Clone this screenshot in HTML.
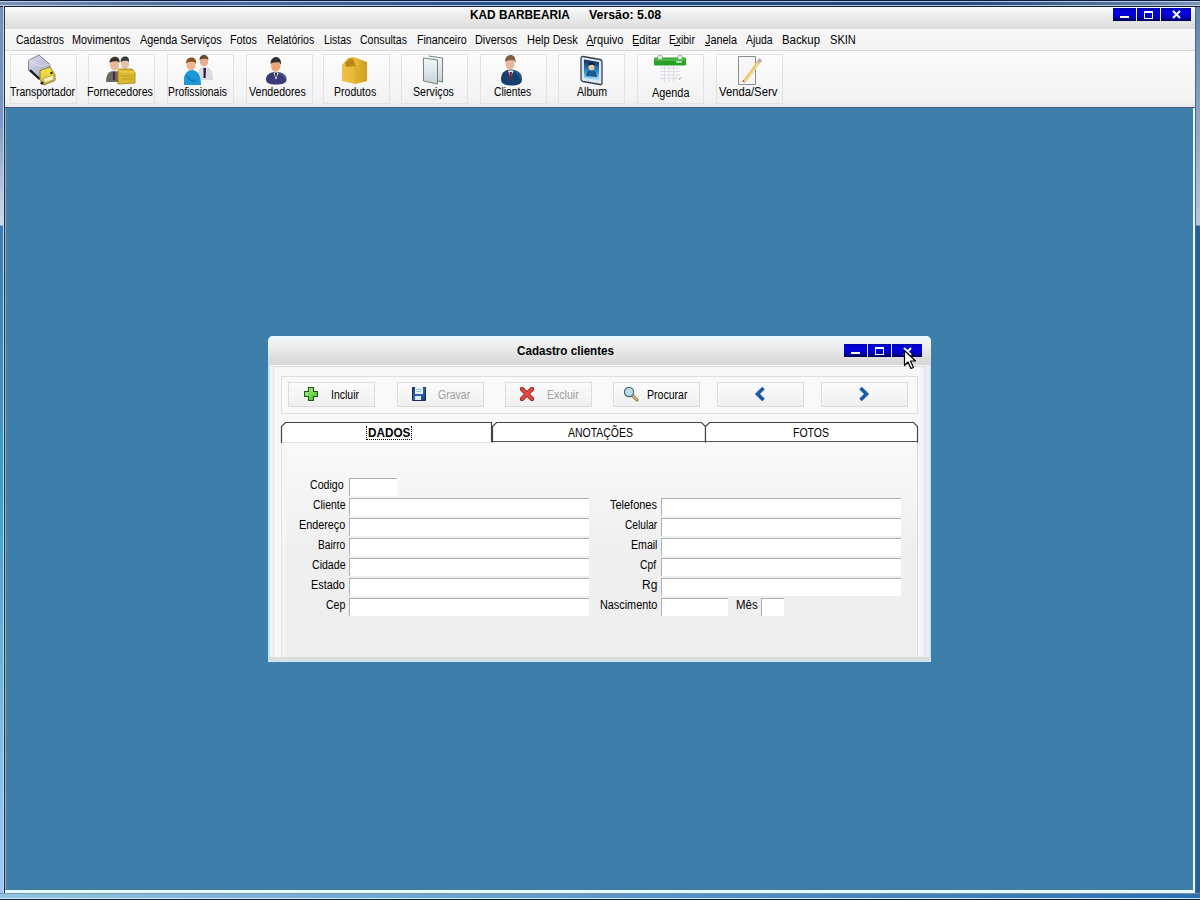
<!DOCTYPE html>
<html><head><meta charset="utf-8">
<style>
*{box-sizing:border-box}
html,body{margin:0;padding:0;width:1200px;height:900px;overflow:hidden;background:#6f8cb4;font-family:"Liberation Sans",sans-serif;font-size:11px;color:#000}
.a{position:absolute}
.t{position:absolute;white-space:nowrap;line-height:15px;transform-origin:0 0}
.b{font-weight:bold}
/* frame */
#frame-top{left:0;top:0;width:1200px;height:7px;background:linear-gradient(#0c1c44 0,#0c1c44 1px,#a8c0e8 1px,#a8c0e8 2px,#3f64a0 2px,#3f64a0 5px,#98b8e8 5px,#98b8e8 6px,#102030 6px)}
#title{left:5px;top:7px;width:1190px;height:22px;background:linear-gradient(#fafbfb,#f0f0f0 30%,#dcdcdc)}
#menu{left:5px;top:29px;width:1190px;height:22px;background:linear-gradient(#f8f8f8,#f2f2f2);border-bottom:1px solid #d6d6d6}
#tool{left:5px;top:51px;width:1190px;height:56px;background:linear-gradient(#fbfbfb,#f3f3f3 85%,#eef2ee 92%,#ebe8f2)}
#tool-line{left:5px;top:107px;width:1190px;height:1px;background:#4d5d7a}
#mdi{left:6px;top:108px;width:1187px;height:782px;background:#3d7eaa}
.cb{position:absolute;background:linear-gradient(#0000b0 0,#0404e0 35%,#0000c0 70%,#000070 92%,#000040);border:0}
.tb{position:absolute;top:54px;width:67px;height:50px;border:1px solid #e2e2e2;background:linear-gradient(#fdfdfd,#f1f1f1)}
.tb .t{left:0;width:65px;text-align:center;top:32px}
.tb svg{position:absolute;left:16px;top:1px}
.db{position:absolute;top:382px;width:87px;height:25px;border:1px solid #dcdcdc;background:linear-gradient(#fbfbfb,#f0f0f0)}
.db .t{top:7px}
.in{position:absolute;height:18px;background:#fff;border-top:1px solid #b0b0b0;border-left:1px solid #b0b0b0}
</style></head><body>
<!-- outer frame -->
<div class="a" style="left:0;top:0;width:1200px;height:7px;background:linear-gradient(90deg,#7c90b4 0,#52709e 150px,#26508a 500px,#1e4676 950px,#5c7aa4 1150px,#8094b4 1200px)"></div>
<div class="a" style="left:0;top:0;width:1200px;height:7px;background:linear-gradient(#0c1c40 0,#0c1c40 1px,rgba(196,212,238,.9) 1px,rgba(196,212,238,.9) 2px,transparent 2px,transparent 5px,rgba(196,212,236,.9) 5px,rgba(196,212,236,.9) 6px,#102030 6px)"></div>
<div class="a" style="left:0;top:7px;width:4px;height:893px;background:linear-gradient(#7090b8 0,#7898c0 110px,#d0dcf0 218px,#3a7ab8 219px,#40a0c8 490px,#80c0e8 750px,#a0c8f0 893px)"></div>
<div class="a" style="left:3px;top:6px;width:1px;height:894px;background:#c0d4ec"></div>
<div class="a" style="left:4px;top:7px;width:1px;height:893px;background:#203450"></div>
<div class="a" style="left:1195px;top:7px;width:5px;height:893px;background:linear-gradient(#6484aa 0,#b8c4d8 218px,#2460a0 219px,#2460a0 893px)"></div>
<div class="a" style="left:1195px;top:7px;width:1px;height:893px;background:#406890"></div>
<div class="a" id="title"></div>
<div class="a" id="menu"></div>
<div class="a" id="tool"></div>
<div class="a" id="tool-line"></div>
<div class="a" id="mdi"></div>
<div class="a" style="left:5px;top:108px;width:3px;height:782px;background:linear-gradient(90deg,#8ab0c8 0,#8ab0c8 1px,#507890 1px,#4a80a8 3px)"></div>
<div class="a" style="left:1192px;top:108px;width:1px;height:782px;background:#4a7890"></div>
<div class="a" style="left:1193px;top:108px;width:2px;height:785px;background:#e0fcff"></div>
<div class="a" style="left:5px;top:889px;width:1188px;height:1px;background:#4a7890"></div>
<div class="a" style="left:5px;top:890px;width:1190px;height:3px;background:#e0fcff"></div>
<div class="a" style="left:0;top:893px;width:1200px;height:7px;background:linear-gradient(90deg,#90c4e4,#4a8ac0 800px,#2a70b0)"></div>
<div class="a" style="left:0;top:893px;width:1200px;height:7px;background:linear-gradient(rgba(128,144,160,.9) 0,rgba(128,144,160,.9) 1px,transparent 1px,transparent 5px,rgba(224,240,255,.9) 5px,rgba(224,240,255,.9) 6px,#102030 6px)"></div>

<!-- title text -->
<!-- caption buttons -->
<div class="cb" style="left:1113px;top:8px;width:23px;height:13px"><div class="a" style="left:7px;top:8px;width:9px;height:2px;background:#fff"></div></div>
<div class="cb" style="left:1137px;top:8px;width:23px;height:13px"><div class="a" style="left:7px;top:3px;width:9px;height:8px;border:1px solid #fff;border-top-width:2px"></div></div>
<div class="cb" style="left:1161px;top:8px;width:30px;height:13px"><svg class="a" style="left:11px;top:2px" width="9" height="9" viewBox="0 0 9 9"><path d="M1 1L8 8M8 1L1 8" stroke="#fff" stroke-width="2"/></svg></div>

<!-- menu -->

<!-- toolbar buttons -->
<div class="tb" style="left:10px"></div>
<div class="tb" style="left:88px"></div>
<div class="tb" style="left:167px"></div>
<div class="tb" style="left:246px"></div>
<div class="tb" style="left:323px"></div>
<div class="tb" style="left:401px"></div>
<div class="tb" style="left:480px"></div>
<div class="tb" style="left:558px"></div>
<div class="tb" style="left:637px"></div>
<div class="tb" style="left:716px"></div>

<!-- DIALOG -->
<div class="a" id="dlg" style="left:268px;top:336px;width:663px;height:326px;border-radius:5px 5px 0 0;background:#c8e8f8;overflow:hidden">
  <div class="a" style="left:0;top:0;width:663px;height:29px;background:linear-gradient(#e4fdff 0,#f0f4f4 4px,#ececec 40%,#dadada 85%,#d8d8d8)"></div>
  <div class="a" style="left:2px;top:29px;width:659px;height:292px;background:linear-gradient(90deg,#f0f0ec 0,#f4f4f2 4px,#f8f8f8 6px,#f8f8f8 650px,#ece8f4 655px,#f0f0f8)"></div>
  <div class="a" style="left:5px;top:30px;width:652px;height:1px;background:#dcdcdc"></div>
  <div class="a" style="left:5px;top:30px;width:1px;height:291px;background:#e6e6e6"></div>
  <div class="a" style="left:657px;top:30px;width:1px;height:291px;background:#e6e6e6"></div>
  <div class="a" style="left:1px;top:321px;width:661px;height:4px;background:#dcdcdc"></div>
  <div class="a" style="left:0;top:325px;width:663px;height:1px;background:#c8ecfc"></div>
</div>
<div class="cb" style="left:844px;top:344px;width:23px;height:13px"><div class="a" style="left:7px;top:8px;width:9px;height:2px;background:#fff"></div></div>
<div class="cb" style="left:868px;top:344px;width:23px;height:13px"><div class="a" style="left:7px;top:3px;width:9px;height:8px;border:1px solid #fff;border-top-width:2px"></div></div>
<div class="cb" style="left:892px;top:344px;width:30px;height:13px"><svg class="a" style="left:11px;top:3px" width="9" height="9" viewBox="0 0 9 9"><path d="M1 1L8 8M8 1L1 8" stroke="#fff" stroke-width="2"/></svg></div>

<!-- panel -->
<div class="a" style="left:281px;top:376px;width:637px;height:38px;border:1px solid #dedede;background:#f9f9f9"></div>
<div class="db" style="left:288px"></div>
<div class="db" style="left:397px"></div>
<div class="db" style="left:505px"></div>
<div class="db" style="left:613px"></div>
<div class="db" style="left:717px"></div>
<div class="db" style="left:821px"></div>

<!-- tabs -->
<div class="a" style="left:281px;top:442px;width:637px;height:215px;border-left:1px solid #e4e4e4;border-right:1px solid #dadada;background:linear-gradient(#fafafa 0,#f6f6f6 40px,#efefef 110px)"></div>
<div class="a" style="left:282px;top:442px;width:5px;height:215px;background:linear-gradient(90deg,rgba(248,246,248,.8),rgba(244,244,244,.4))"></div>
<svg class="a" style="left:280px;top:421px" width="640" height="23" viewBox="0 0 640 23">
  <path d="M1.5 22V5.5L5.5 1.5H211.5V22" fill="#fff" stroke="#444" stroke-width="1.2"/>
  <path d="M212.5 21.5V5.5L216.5 1.5H421.5L425.5 5.5V21.5" fill="#fff" stroke="#444" stroke-width="1.2"/>
  <path d="M425.5 21.5V5.5L429.5 1.5H633.5L637.5 5.5V21.5" fill="#fff" stroke="#444" stroke-width="1.2"/>
  <path d="M212 20.5H638" stroke="#555" stroke-width="1.2"/>
  <path d="M2 21.5H212" stroke="#e2e2e2" stroke-width="1"/>
</svg>
<div class="a" style="left:366px;top:426px;width:46px;height:14px;border:1px dotted #000;border-top:0"></div>

<!-- form -->
<div class="in" style="left:349px;top:478px;width:48px"></div>
<div class="in" style="left:349px;top:498px;width:240px"></div>
<div class="in" style="left:349px;top:518px;width:240px"></div>
<div class="in" style="left:349px;top:538px;width:240px"></div>
<div class="in" style="left:349px;top:558px;width:240px"></div>
<div class="in" style="left:349px;top:578px;width:240px"></div>
<div class="in" style="left:349px;top:598px;width:240px"></div>

<div class="in" style="left:661px;top:498px;width:240px"></div>
<div class="in" style="left:661px;top:518px;width:240px"></div>
<div class="in" style="left:661px;top:538px;width:240px"></div>
<div class="in" style="left:661px;top:558px;width:240px"></div>
<div class="in" style="left:661px;top:578px;width:240px"></div>
<div class="in" style="left:661px;top:598px;width:67px"></div>
<div class="in" style="left:761px;top:598px;width:23px"></div>


<!-- toolbar icons -->
<svg class="a" style="left:27px;top:54px" width="32" height="32" viewBox="0 0 32 32">
  <defs><linearGradient id="tk" x1="0" y1="0" x2="1" y2="1"><stop offset="0" stop-color="#dcdcec"/><stop offset="1" stop-color="#a4a4c0"/></linearGradient>
  <linearGradient id="cab" x1="0" y1="0" x2="0" y2="1"><stop offset="0" stop-color="#f4e44a"/><stop offset="1" stop-color="#dcc038"/></linearGradient></defs>
  <path d="M1.5 6.5L12 1L23 10.5V16L13.5 26.5L1.5 16.5Z" fill="url(#tk)" stroke="#6a6a7a" stroke-width="0.8"/>
  <path d="M1.5 6.5L12 12L23 10.5" fill="none" stroke="#f0f0f8" stroke-width="0.8" opacity="0.8"/>
  <path d="M3 16L12.5 25" stroke="#1a1a1a" stroke-width="2.2"/>
  <path d="M13 16.5L23 13L28 20.5V26.5L17 31L13 25.5Z" fill="url(#cab)" stroke="#7a6420" stroke-width="0.8"/>
  <path d="M16.5 24.5L26.5 21L27 25.5L17.5 29Z" fill="#faf4b8" stroke="#8a7430" stroke-width="0.5"/>
  <circle cx="15" cy="29" r="1.6" fill="#202020"/><circle cx="24.5" cy="19" r="1.2" fill="#202020"/>
</svg>
<svg class="a" style="left:105px;top:54px" width="32" height="32" viewBox="0 0 32 32">
  <path d="M1 28C1 20 4 17 9 17C14 17 17 20 17 28Z" fill="#6a6a60"/>
  <path d="M8 18L10 18L10 26L8 26Z" fill="#502040"/>
  <ellipse cx="9.5" cy="11" rx="4.6" ry="5.4" fill="#e8b898"/>
  <path d="M4.5 9C4.5 4 8 2.8 10 2.8C13 2.8 15 5 14.5 9L13 7.5C11 7 8 7 6 8Z" fill="#3a3028"/>
  <ellipse cx="20" cy="10" rx="4.2" ry="5" fill="#e8c0a8"/>
  <path d="M15.5 8C15.5 4 18 2.5 20 2.5C23 2.5 24.5 4.5 24 8L23 7C21 6.5 18 6.5 16.5 7.5Z" fill="#3a3a36"/>
  <path d="M13 15L27 15L30 18L30 29L13 30Z" fill="#d8b830" stroke="#a08018" stroke-width="0.8"/>
  <path d="M13 15L16 18L30 18" fill="none" stroke="#f0d850" stroke-width="1"/>
  <path d="M16 22H28M16 25H28" stroke="#b89820" stroke-width="0.8"/>
</svg>
<svg class="a" style="left:184px;top:54px" width="32" height="32" viewBox="0 0 32 32">
  <path d="M13 26C13 16 16 13 21 13C26 13 29 16 29 26Z" fill="#d8dce0"/>
  <path d="M19.5 14L22 14L21.5 24L19.5 24Z" fill="#301848"/>
  <ellipse cx="20" cy="7.5" rx="4.2" ry="5" fill="#e0b090"/>
  <path d="M15.5 6C15.5 2 18 1 20 1C23 1 24.5 3 24.5 6L23 5C21 4.5 18 4.5 16.5 5.5Z" fill="#684830"/>
  <path d="M-1 31C-1 21 3 16 8 16C13 16 17 21 17 31Z" fill="#1c98d8"/>
  <path d="M3 22C5 26 9 28 12 27" stroke="#0a70b0" stroke-width="1.2" fill="none"/>
  <ellipse cx="7" cy="11" rx="4.6" ry="5.4" fill="#eab890"/>
  <path d="M2 9.5C2 5 5 3.5 7.5 3.5C11 3.5 12.5 6 12 10L10.5 8C8.5 7.5 5 7.5 3.5 8.5Z" fill="#8a5020"/>
</svg>
<svg class="a" style="left:263px;top:54px" width="32" height="32" viewBox="0 0 32 32">
  <path d="M3 25.5C3 20.5 7 18 13 18C19 18 23.5 20.5 23.5 25.5C23.5 29.5 19 30.5 13 30.5C7 30.5 3 29.5 3 25.5Z" fill="#3a3a78"/><path d="M15 19.5C19 20 22 22 22 25" stroke="#6a6aa8" stroke-width="1.2" fill="none" opacity="0.7"/>
  <path d="M10.5 18.5L15.5 18.5L13 26Z" fill="#f0f0f0"/>
  <path d="M12 19L14 19L13.5 23L12.5 23Z" fill="#102010"/>
  <ellipse cx="12.7" cy="12" rx="4.7" ry="5.8" fill="#eaa878"/>
  <path d="M7.5 10C7.5 5 10.5 3 13 3C16.5 3 18.5 6 18 11L16.5 8.5C14 8 11 8 9 9Z" fill="#303030"/>
</svg>
<svg class="a" style="left:340px;top:54px" width="32" height="32" viewBox="0 0 32 32">
  <defs><linearGradient id="bx" x1="0" y1="0" x2="1" y2="0"><stop offset="0" stop-color="#f0c048"/><stop offset="0.6" stop-color="#e8b838"/><stop offset="1" stop-color="#c89818"/></linearGradient></defs>
  <path d="M2 11L8 4L14 3L27 8L27 27L15 30L2 27Z" fill="url(#bx)"/>
  <path d="M5 9L10 4L13 5L16 12L6 13Z" fill="#b88a18"/>
  <path d="M14 12L27 10L27 27L15 30Z" fill="#d8a828" opacity="0.6"/>
</svg>
<svg class="a" style="left:418px;top:54px" width="32" height="32" viewBox="0 0 32 32">
  <defs><linearGradient id="pg" x1="0" y1="0" x2="0" y2="1"><stop offset="0" stop-color="#f4f8fa"/><stop offset="1" stop-color="#c8d4d8"/></linearGradient></defs>
  <path d="M10.5 2L24.5 4V28L19.5 27" fill="url(#pg)" stroke="#6a7474" stroke-width="0.9"/>
  <path d="M5.5 4L19.5 6V30L5.5 27Z" fill="url(#pg)" stroke="#6a7474" stroke-width="0.9"/>
</svg>
<svg class="a" style="left:497px;top:54px" width="32" height="32" viewBox="0 0 32 32">
  <path d="M4 25C4 19 8 15.5 14 15.5C20 15.5 25 19 25 25C25 30 21 31.5 14.5 31.5C8 31.5 4 30 4 25Z" fill="#17406e"/><path d="M16 17C21 18 23.5 21 23.5 25" stroke="#2a6aa8" stroke-width="1.5" fill="none" opacity="0.7"/>
  <path d="M11 16.5L16.5 16.5L13.5 25Z" fill="#f0e8e8"/>
  <path d="M12.5 18L15 18L14.5 26L12.5 25Z" fill="#702040"/>
  <ellipse cx="13" cy="10" rx="4.4" ry="5.6" fill="#eab898"/>
  <path d="M8 8C8 3 11 1 13.5 1C17 1 19 3.5 18.5 9L17 6.5C15 6 11 6 9.5 7Z" fill="#806040"/>
</svg>
<svg class="a" style="left:575px;top:54px" width="32" height="32" viewBox="0 0 32 32">
  <defs><linearGradient id="ph" x1="0" y1="0" x2="0" y2="1"><stop offset="0" stop-color="#0c2c58"/><stop offset="0.55" stop-color="#2a8cc8"/><stop offset="1" stop-color="#b8e8fa"/></linearGradient></defs>
  <path d="M8 2.5L25 5.5Q27 6 27 8V29Q27 31 25 30.5L8 27.5Q6 27 6 25V4.5Q6 2.2 8 2.5Z" fill="#dce8f0" stroke="#3a3e44" stroke-width="1.3"/>
  <path d="M9 5.5L24 8V26.5L9 24Z" fill="url(#ph)"/>
  <path d="M11 22C11 18 13.5 16 16.5 16C19.5 16 22 18.5 22 23Z" fill="#1a5a90"/>
  <ellipse cx="16.5" cy="13" rx="3" ry="3.6" fill="#e8c8a8"/>
  <path d="M13.2 12C13.2 9 15 8.2 16.5 8.2C18.5 8.2 20 9.5 19.8 12L18.5 11C17 10.6 15 10.6 14 11.3Z" fill="#0a1a30"/>
</svg>
<svg class="a" style="left:654px;top:54px" width="32" height="32" viewBox="0 0 32 32">
  <path d="M6 14H26M6 17.5H26M6 21H26M6 24.5H26M10.5 12V28M15 12V28M19.5 12V28" stroke="#dcdce4" stroke-width="1"/>
  <path d="M25 26L28 23" stroke="#a0a0a0" stroke-width="0.8"/>
  <path d="M1 3.5H31Q32 3.5 32 5V10.5Q32 11.5 31 11.5H1Q0 11.5 0 10.5V5Q0 3.5 1 3.5Z" fill="#28a028"/>
  <path d="M1 4.5H31V7H1Z" fill="#58c058" opacity="0.7"/>
  <rect x="3.5" y="1.5" width="5" height="4" rx="1.5" fill="#d8ecd8" stroke="#609060" stroke-width="0.5"/><rect x="23.5" y="1.5" width="5" height="4" rx="1.5" fill="#d8ecd8" stroke="#609060" stroke-width="0.5"/>
  <path d="M22 8H28" stroke="#c8f0c8" stroke-width="1.6"/>
</svg>
<svg class="a" style="left:733px;top:54px" width="32" height="32" viewBox="0 0 32 32">
  <path d="M5.5 2.5H22.5V30.5H5.5Z" fill="#f6f6f8" stroke="#8a8e92" stroke-width="1"/>
  <path d="M9.5 27.5L24 7L27 9.5L12.5 29Z" fill="#f4d488"/>
  <path d="M10.5 27L25 7.5" stroke="#e0b050" stroke-width="0.8"/>
  <path d="M9.5 27.5L10.5 25.5L11.5 28.5Z" fill="#806040"/>
  <path d="M24 7L26.5 4L29 6.5L27 9.5Z" fill="#b8a8b8"/>
</svg>
<!-- dialog button icons -->
<svg class="a" style="left:304px;top:387px" width="14" height="14" viewBox="0 0 14 14">
  <defs><linearGradient id="pl" x1="0" y1="0" x2="1" y2="1"><stop offset="0" stop-color="#b0f890"/><stop offset="1" stop-color="#40b820"/></linearGradient></defs><path d="M4.5 0.5H9.5V4.5H13.5V9.5H9.5V13.5H4.5V9.5H0.5V4.5H4.5Z" fill="url(#pl)" stroke="#1a5a14" stroke-width="1.1"/>
</svg>
<svg class="a" style="left:412px;top:387px" width="14" height="14" viewBox="0 0 14 14">
  <defs><linearGradient id="fl" x1="0" y1="0" x2="1" y2="1"><stop offset="0" stop-color="#1a3a80"/><stop offset="0.5" stop-color="#3868b8"/><stop offset="1" stop-color="#1a3a78"/></linearGradient></defs>
  <path d="M0.5 0.5H13.5V13.5H0.5Z" fill="url(#fl)" stroke="#1a2a60" stroke-width="1"/>
  <path d="M3 0H11V7H3Z" fill="#e0f4f4"/>
  <path d="M4 2.5H10M4 4.5H9" stroke="#9ab0b8" stroke-width="0.7"/>
  <path d="M3 9H9V13H3Z" fill="#d8ecfc"/>
</svg>
<svg class="a" style="left:520px;top:387px" width="14" height="14" viewBox="0 0 14 14">
  <path d="M2 2L12 12M12 2L2 12" stroke="#8a2020" stroke-width="4.5" stroke-linecap="round"/>
  <path d="M2 2L12 12M12 2L2 12" stroke="#e84840" stroke-width="2.8" stroke-linecap="round"/>
</svg>
<svg class="a" style="left:623px;top:386px" width="16" height="16" viewBox="0 0 16 16">
  <path d="M9 9L14 14" stroke="#806830" stroke-width="3" stroke-linecap="round"/>
  <path d="M9 9L14 14" stroke="#e0c890" stroke-width="1.4" stroke-linecap="round"/>
  <circle cx="6" cy="6" r="4.6" fill="#b8dce8" stroke="#506870" stroke-width="1.2"/>
</svg>
<svg class="a" style="left:754px;top:386px" width="14" height="16" viewBox="0 0 14 16">
  <path d="M9.5 2L3.5 8L9.5 14" fill="none" stroke="#1a5aa8" stroke-width="3.6"/>
</svg>
<svg class="a" style="left:857px;top:386px" width="14" height="16" viewBox="0 0 14 16">
  <path d="M3.5 2L9.5 8L3.5 14" fill="none" stroke="#1a5aa8" stroke-width="3.6"/>
</svg>

<!-- cursor -->
<svg class="a" style="left:903px;top:349px" width="14" height="21" viewBox="0 0 14 21"><path d="M1.5 1.5V16.5L5 13L8 19.5L10.5 18.5L7.5 12H12.5Z" fill="#fff" stroke="#000" stroke-width="1.2" stroke-linejoin="round"/></svg>

<!--UL-->
<div class="a" style="left:587px;top:45px;width:7px;height:1px;background:#000"></div>
<div class="a" style="left:633px;top:45px;width:6px;height:1px;background:#000"></div>
<div class="a" style="left:674px;top:45px;width:6px;height:1px;background:#000"></div>
<div class="a" style="left:705px;top:45px;width:5px;height:1px;background:#000"></div>
<!--/UL-->
<!--TEXT-->
<div class="t" style="left:469.61px;top:8px;font-size:12.0px;font-weight:700;transform:scaleX(0.9860)">KAD BARBEARIA</div>
<div class="t" style="left:589.40px;top:8px;font-size:12.0px;font-weight:700;transform:scaleX(1.0300)">Versão: 5.08</div>
<div class="t" style="left:15.62px;top:33px;font-size:12.0px;font-weight:400;transform:scaleX(0.8774)">Cadastros</div>
<div class="t" style="left:72.10px;top:33px;font-size:12.0px;font-weight:400;transform:scaleX(0.9048)">Movimentos</div>
<div class="t" style="left:140.00px;top:33px;font-size:12.0px;font-weight:400;transform:scaleX(0.9000)">Agenda Serviços</div>
<div class="t" style="left:230.10px;top:33px;font-size:12.0px;font-weight:400;transform:scaleX(0.8966)">Fotos</div>
<div class="t" style="left:266.63px;top:33px;font-size:12.0px;font-weight:400;transform:scaleX(0.8726)">Relatórios</div>
<div class="t" style="left:323.63px;top:33px;font-size:12.0px;font-weight:400;transform:scaleX(0.8667)">Listas</div>
<div class="t" style="left:360.37px;top:33px;font-size:12.0px;font-weight:400;transform:scaleX(0.8798)">Consultas</div>
<div class="t" style="left:416.61px;top:33px;font-size:12.0px;font-weight:400;transform:scaleX(0.8864)">Financeiro</div>
<div class="t" style="left:475.34px;top:33px;font-size:12.0px;font-weight:400;transform:scaleX(0.9056)">Diversos</div>
<div class="t" style="left:526.58px;top:33px;font-size:12.0px;font-weight:400;transform:scaleX(0.9167)">Help Desk</div>
<div class="t" style="left:586.25px;top:33px;font-size:12.0px;font-weight:400;transform:scaleX(0.9187)">Arquivo</div>
<div class="t" style="left:631.58px;top:33px;font-size:12.0px;font-weight:400;transform:scaleX(0.9167)">Editar</div>
<div class="t" style="left:669.14px;top:33px;font-size:12.0px;font-weight:400;transform:scaleX(0.8621)">Exibir</div>
<div class="t" style="left:704.50px;top:33px;font-size:12.0px;font-weight:400;transform:scaleX(0.9071)">Janela</div>
<div class="t" style="left:746.25px;top:33px;font-size:12.0px;font-weight:400;transform:scaleX(0.8629)">Ajuda</div>
<div class="t" style="left:782.05px;top:33px;font-size:12.0px;font-weight:400;transform:scaleX(0.9487)">Backup</div>
<div class="t" style="left:829.58px;top:33px;font-size:12.0px;font-weight:400;transform:scaleX(0.9231)">SKIN</div>
<div class="t" style="left:10.00px;top:85px;font-size:12.0px;font-weight:400;transform:scaleX(0.8667)">Transportador</div>
<div class="t" style="left:87.41px;top:85px;font-size:12.0px;font-weight:400;transform:scaleX(0.8904)">Fornecedores</div>
<div class="t" style="left:168.43px;top:85px;font-size:12.0px;font-weight:400;transform:scaleX(0.8657)">Profissionais</div>
<div class="t" style="left:249.30px;top:85px;font-size:12.0px;font-weight:400;transform:scaleX(0.8859)">Vendedores</div>
<div class="t" style="left:333.62px;top:85px;font-size:12.0px;font-weight:400;transform:scaleX(0.8777)">Produtos</div>
<div class="t" style="left:412.86px;top:85px;font-size:12.0px;font-weight:400;transform:scaleX(0.8889)">Serviços</div>
<div class="t" style="left:494.04px;top:85px;font-size:12.0px;font-weight:400;transform:scaleX(0.8595)">Clientes</div>
<div class="t" style="left:577.00px;top:85px;font-size:12.0px;font-weight:400;transform:scaleX(0.8864)">Album</div>
<div class="t" style="left:651.90px;top:86px;font-size:12.0px;font-weight:400;transform:scaleX(0.9049)">Agenda</div>
<div class="t" style="left:718.75px;top:85px;font-size:12.0px;font-weight:400;transform:scaleX(0.9395)">Venda/Serv</div>
<div class="t" style="left:517.00px;top:344px;font-size:12.0px;font-weight:700;transform:scaleX(0.9700)">Cadastro clientes</div>
<div class="t" style="left:330.83px;top:388px;font-size:12.0px;font-weight:400;transform:scaleX(0.8742)">Incluir</div>
<div class="t" style="left:438.32px;top:388px;font-size:12.0px;font-weight:400;color:#a0a0a0;transform:scaleX(0.8778)">Gravar</div>
<div class="t" style="left:546.62px;top:388px;font-size:12.0px;font-weight:400;color:#a0a0a0;transform:scaleX(0.8800)">Excluir</div>
<div class="t" style="left:646.62px;top:388px;font-size:12.0px;font-weight:400;transform:scaleX(0.8800)">Procurar</div>
<div class="t" style="left:368.02px;top:426px;font-size:12.0px;font-weight:700;transform:scaleX(0.9762)">DADOS</div>
<div class="t" style="left:567.50px;top:426px;font-size:12.0px;font-weight:400;transform:scaleX(0.8716)">ANOTAÇÕES</div>
<div class="t" style="left:793.12px;top:426px;font-size:12.0px;font-weight:400;transform:scaleX(0.8750)">FOTOS</div>
<div class="t" style="left:309.52px;top:478px;font-size:12.0px;font-weight:400;transform:scaleX(0.8811)">Codigo</div>
<div class="t" style="left:312.83px;top:498px;font-size:12.0px;font-weight:400;transform:scaleX(0.8694)">Cliente</div>
<div class="t" style="left:299.10px;top:518px;font-size:12.0px;font-weight:400;transform:scaleX(0.9000)">Endereço</div>
<div class="t" style="left:317.75px;top:538px;font-size:12.0px;font-weight:400;transform:scaleX(0.8516)">Bairro</div>
<div class="t" style="left:311.52px;top:558px;font-size:12.0px;font-weight:400;transform:scaleX(0.8811)">Cidade</div>
<div class="t" style="left:311.49px;top:578px;font-size:12.0px;font-weight:400;transform:scaleX(0.9056)">Estado</div>
<div class="t" style="left:325.72px;top:598px;font-size:12.0px;font-weight:400;transform:scaleX(0.8762)">Cep</div>
<div class="t" style="left:610.40px;top:498px;font-size:12.0px;font-weight:400;transform:scaleX(0.9137)">Telefones</div>
<div class="t" style="left:624.75px;top:518px;font-size:12.0px;font-weight:400;transform:scaleX(0.8486)">Celular</div>
<div class="t" style="left:631.42px;top:538px;font-size:12.0px;font-weight:400;transform:scaleX(0.8821)">Email</div>
<div class="t" style="left:640.14px;top:558px;font-size:12.0px;font-weight:400;transform:scaleX(0.8611)">Cpf</div>
<div class="t" style="left:642.00px;top:578px;font-size:12.0px;font-weight:400;transform:scaleX(1.0000)">Rg</div>
<div class="t" style="left:600.10px;top:598px;font-size:12.0px;font-weight:400;transform:scaleX(0.9032)">Nascimento</div>
<div class="t" style="left:736.05px;top:598px;font-size:12.0px;font-weight:400;transform:scaleX(0.9524)">Mês</div>
<!--/TEXT-->
</body></html>
